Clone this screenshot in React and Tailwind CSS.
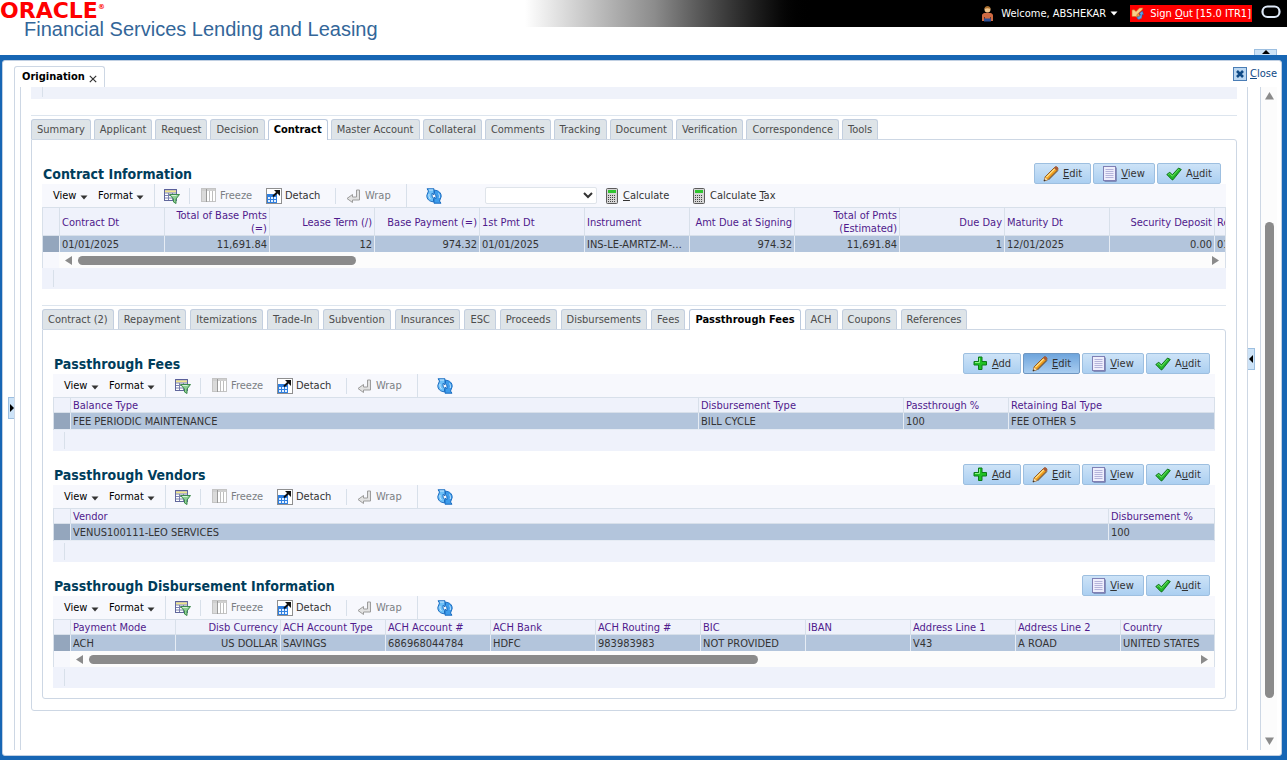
import React from "react";

const Caret = ({ className = "" }) => (
  <svg width="8" height="5" viewBox="0 0 8 5" className={className} aria-hidden="true">
    <path d="M0.5 0.5h7L4 4.5z" fill="currentColor" />
  </svg>
);

const PencilIcon = () => (
  <svg width="16" height="16" viewBox="0 0 16 16" aria-hidden="true">
    <path d="M1 15l1.2-4.2L11.6 1.4c.8-.8 2-.6 2.700.1s.8 1.900.1 2.700L5 13.600z" fill="#f0a01e" stroke="#8a4a0c" strokeWidth=".9" />
    <path d="M3.400 11.200L12 2.600" stroke="#ffe08a" strokeWidth="1.300" />
    <path d="M11 2l1-1c.8-.7 2-.4 2.600.2.700.7.700 1.800 0 2.500l-.9.900z" fill="#a8593a" />
    <path d="M1 15l1-3.800 2.800 2.600z" fill="#f3d9ae" />
    <path d="M.8 15.200l.6-2 1.400 1.400z" fill="#222" />
    <path d="M5.500 14L15 4.500" stroke="#5a3a16" strokeWidth=".8" />
  </svg>
);

const PageIcon = () => (
  <svg width="14" height="16" viewBox="0 0 14 16" aria-hidden="true">
    <rect x="1.500" y="1.500" width="12" height="14" fill="#4f4f86" />
    <rect x=".5" y=".5" width="12" height="14" fill="#eeeefc" stroke="#8080b4" />
    <path d="M2.500 3.500h8M2.500 5.500h8M2.500 7.500h8M2.500 9.500h8M2.500 11.500h8" stroke="#b4b4da" />
  </svg>
);

const CheckIcon = () => (
  <svg width="16" height="14" viewBox="0 0 16 14" aria-hidden="true">
    <path d="M.8 7.500l3-2.300 2.500 2.600L12.600 1l2.700 1.500L7 12.800h-1z" fill="#23b52a" stroke="#0c6b14" strokeWidth=".9" strokeLinejoin="round" />
    <path d="M2.300 7.500l1.500-1 2.500 2.800L12.900 2.200" fill="none" stroke="#6fe566" strokeWidth="1" />
  </svg>
);

const PlusIcon = () => (
  <svg width="15" height="15" viewBox="0 0 15 15" aria-hidden="true">
    <path d="M5.500 1h3.500v4.500h4.500v3.500H9v4.500H5.500V9H1V5.500h4.500z" fill="#1fc024" stroke="#0c7a18" strokeLinejoin="round" />
    <path d="M6.500 2v4.500H2" fill="none" stroke="#8df085" />
  </svg>
);

const QueryIcon = () => (
  <svg width="16" height="16" viewBox="0 0 16 16" aria-hidden="true">
    <rect x=".5" y="1.500" width="12" height="11" fill="#fff" stroke="#61679c" />
    <rect x="1" y="1" width="11" height="1.500" fill="#5a5f9a" />
    <rect x="1" y="2.500" width="11" height="2" fill="#efe58a" />
    <path d="M1 5h11M1 7.500h11M1 10h11M4.500 5v7M8.500 5v7" stroke="#7b81b0" strokeWidth="1" />
    <path d="M5.500 6.500h10L12 11v4.500l-2.500-1.500v-3z" fill="#8ccf93" stroke="#3f8a4d" />
    <path d="M7.500 7.500h5" stroke="#d5f3d6" />
  </svg>
);

const FreezeIcon = () => (
  <svg width="15" height="15" viewBox="0 0 15 15" aria-hidden="true">
    <rect x=".5" y=".5" width="14" height="13" fill="#fff" stroke="#c4c4c4" />
    <rect x="1" y="1" width="13" height="2" fill="#cfcfcf" />
    <rect x="1" y="3" width="4" height="10" fill="#dadada" />
    <path d="M8.500 3v11M11.500 3v11" stroke="#bdbdbd" />
    <path d="M5.500 1v13" stroke="#999" />
  </svg>
);

const DetachIcon = () => (
  <svg width="16" height="16" viewBox="0 0 16 16" aria-hidden="true">
    <rect x=".5" y=".5" width="15" height="15" fill="#fff" stroke="#222" strokeDasharray="1 1" />
    <rect x="1" y="6" width="10" height="9" fill="#2f7fe0" />
    <path d="M2 9h2v2H2zM5 9h2v2H5zM8 9h2v2H8zM2 12h2v2H2zM5 12h2v2H5zM8 12h2v2H8z" fill="#e3f0ff" />
    <path d="M7 8.500L11.500 4" stroke="#111" strokeWidth="1.800" />
    <path d="M8 2h6v6z" fill="#111" />
  </svg>
);

const WrapIcon = () => (
  <svg width="15" height="14" viewBox="0 0 15 14" aria-hidden="true">
    <path d="M10.500 1h3v10H6.500v2.500L1 9.500 6.500 5.500V8h4z" fill="#e2e2e2" stroke="#9c9c9c" strokeLinejoin="round" />
  </svg>
);

const RefreshIcon = () => (
  <svg width="16" height="16" viewBox="0 0 16 16" aria-hidden="true">
    <path d="M1 .8h7v6L6 5.300V7c0 1.500.5 2.500 1.500 3.500v3.300C3 13.500 .8 11 .8 7.500L2.500 3z" fill="#6cbff7" stroke="#1a6cc0" strokeLinejoin="round" />
    <path d="M15 15.200H8v-6l2 1.500V9c0-1.500-.5-2.500-1.500-3.500V2.200C13 2.500 15.200 5 15.200 8.500L13.500 13z" fill="#3d9ceb" stroke="#1a6cc0" strokeLinejoin="round" />
    <path d="M3 2h4M3 6c-.3 2 .2 3.700 1.500 5M12.500 5.500c1 1.500 1.200 3 .7 4.500" fill="none" stroke="#c6e7ff" />
  </svg>
);

const CalculatorIcon = () => (
  <svg width="12" height="16" viewBox="0 0 12 16" aria-hidden="true">
    <rect x=".5" y=".5" width="11" height="15" rx="1" fill="#d6d6d6" stroke="#5c5c5c" />
    <rect x="2" y="2" width="8" height="3" fill="#2fc42f" />
    <path d="M2 7.500h8M2 9.500h8M2 11.500h8M2 13.500h8" stroke="#444" strokeDasharray="1 1" />
  </svg>
);

const UserIcon = () => (
  <svg width="13" height="16" viewBox="0 0 13 16" aria-hidden="true">
    <circle cx="6.500" cy="3.500" r="3" fill="#f0c48c" />
    <path d="M3.500 3C3.500 1 5 .3 6.500.3S9.500 1 9.500 3C8 2 5 2 3.500 3z" fill="#a86a28" />
    <path d="M1 15V9.500C1 7.500 3.500 6.800 6.500 6.800s5.500.7 5.500 2.700V15h-2v-4H3v4z" fill="#cf6a42" />
    <path d="M3.500 8h6v5h-6z" fill="#cf6a42" />
    <path d="M3 12.500h7v3H3z" fill="#2c4f96" />
  </svg>
);

const SignOutIcon = () => (
  <svg width="13" height="13" viewBox="0 0 13 13" aria-hidden="true">
    <path d="M2.500 7.500L8 12.500l3-1.500-4-5z" fill="#e39a45" />
    <path d="M12 1L8.500 1 5 4.500 3.200 2.700 1 3v6.500h6L5.500 8 11 3z" fill="#f9d089" stroke="#c96e1e" strokeWidth=".6" />
    <path d="M6.500 12c3 .8 5-1 4.500-4.500l1.500.3L11.500 4 8 6.500l1.300.5c.2 1.800-1 3-3.300 3z" fill="#5ba6f0" stroke="#215a9c" strokeWidth=".5" />
  </svg>
);

const Tabs = ({ items, active, gap }) => (
  <div className="border-t border-[#dde5ee] pt-[3px]">
    <div className={`flex ${gap}`} role="tablist">
      {items.map((t) =>
        t === active ? (
          <button key={t} role="tab" aria-selected="true" className="relative z-10 -mb-px h-[21px] whitespace-nowrap rounded-t-[3px] border border-b-0 border-[#bccade] bg-white px-[5px] font-bold text-black">
            {t}
          </button>
        ) : (
          <button key={t} role="tab" aria-selected="false" className="h-5 whitespace-nowrap rounded-t-[3px] border border-b-0 border-[#c3cfdf] bg-[#dee4e8] px-[5px] text-[#4c4c4c]">
            {t}
          </button>
        )
      )}
    </div>
  </div>
);

const actionDefs = {
  Add: { icon: PlusIcon, width: "w-[58px]", label: <><u>A</u>dd</> },
  Edit: { icon: PencilIcon, width: "w-[57px]", label: <><u>E</u>dit</> },
  View: { icon: PageIcon, width: "w-[62px]", label: <><u>V</u>iew</> },
  Audit: { icon: CheckIcon, width: "w-[64px]", label: <>A<u>u</u>dit</> },
};

const Actions = ({ names, pressed }) => (
  <div className="flex gap-[2px] pr-[5px]">
    {names.map((n) => {
      const { icon: Icon, width, label } = actionDefs[n];
      const tone =
        n === pressed
          ? "border-[#6f97c2] bg-linear-to-b from-[#6fa5dc] to-[#a9cdf0]"
          : "border-[#9dbfe0] bg-linear-to-b from-[#cde3f7] to-[#abcff1]";
      return (
        <button key={n} className={`flex h-[21px] items-center justify-center gap-1 rounded-[2px] border text-[#333] ${width} ${tone}`}>
          <Icon />
          <span>{label}</span>
        </button>
      );
    })}
  </div>
);

const Separator = () => <span className="w-px self-stretch bg-[#d8e0ea]" />;
const ShortSeparator = () => <span className="h-4 w-px bg-[#d8e0ea]" />;

const Toolbar = ({ extra }) => (
  <div className="flex h-[23px] items-center bg-[#f7f8fd] text-[#333]">
    <button className="ml-[11px] flex w-[45px] items-center gap-1 text-black">View <Caret className="mt-1 text-[#333]" /></button>
    <button className="flex w-14 items-center gap-[3px] text-black">Format <Caret className="mt-1 text-[#333]" /></button>
    <Separator />
    <button aria-label="Query by example" className="flex w-[34px] justify-center"><QueryIcon /></button>
    <ShortSeparator />
    <button disabled className="ml-[11px] flex w-[65px] items-center gap-1 text-[#7b7f84]"><FreezeIcon />Freeze</button>
    <button className="flex w-[69px] items-center gap-[3px]"><DetachIcon />Detach</button>
    <ShortSeparator />
    <button disabled className="ml-[10px] flex w-[60px] items-center gap-1 text-[#7b7f84]"><WrapIcon />Wrap</button>
    <Separator />
    <button aria-label="Refresh" className="ml-[19px]"><RefreshIcon /></button>
    {extra}
  </div>
);

const CalculateTools = () => (
  <div className="ml-[43px] flex items-center">
    <select aria-label="Calculation" className="h-[17px] w-28 rounded-[2px] border border-[#dfe4ea] bg-white text-[11px]">
      <option></option>
    </select>
    <button className="ml-[9px] flex w-[87px] items-center gap-[5px]"><CalculatorIcon /><span><u>C</u>alculate</span></button>
    <button className="flex items-center gap-[5px]"><CalculatorIcon /><span>Calculate <u>T</u>ax</span></button>
  </div>
);

const DataTable = ({ columns, row, tall, thumb }) => (
  <div>
    <div className="border-x border-[#d8e0ea]">
      <table className="w-full table-fixed border-separate border-spacing-0">
        <colgroup>
          <col className="w-4" />
          {columns.map((c) => <col key={c.name} className={c.width} />)}
        </colgroup>
        <thead>
          <tr className={`bg-[#eff2fb] ${tall ? "h-[29px]" : "h-4"}`}>
            <th aria-label="Row" className="border-y border-[#d8e0ea] p-0" />
            {columns.map((c) => (
              <th key={c.name} className={`overflow-hidden border-y border-l border-[#d8e0ea] px-[2px] pb-0 font-normal text-[#4f1a8c] ${tall ? "pt-px leading-[13px]" : "pt-[2px] leading-[12px]"} ${c.right ? "text-right" : "text-left"} ${c.wrap ? "" : "whitespace-nowrap"}`}>
                {c.name}
              </th>
            ))}
          </tr>
        </thead>
        <tbody>
          <tr className={`bg-[#b3c5dc] text-[#333] ${thumb ? "h-4" : "h-[17px]"}`}>
            <td className={`border-[#e6ecf4] bg-[#94a6bd] p-0 ${thumb ? "" : "border-b"}`} />
            {row.map((v, i) => (
              <td key={i} className={`overflow-hidden whitespace-nowrap border-l border-[#e6ecf4] px-[2px] pb-0 pt-[2px] leading-[14px] ${thumb ? "" : "border-b"} ${columns[i].clip ? "text-clip" : "text-ellipsis"} ${columns[i].right ? "text-right" : "text-left"}`}>
                {v}
              </td>
            ))}
          </tr>
        </tbody>
      </table>
      {thumb && (
        <div className="flex h-4 bg-[#fcfcfc] text-[#8b8b8b]">
          <span className="w-4 bg-[#f7f8fd]" />
          <div className="flex flex-1 items-center gap-[6px] px-[6px]">
            <svg width="7" height="9" viewBox="0 0 7 9" aria-hidden="true"><path d="M7 0v9L0 4.500z" fill="currentColor" /></svg>
            <div className="flex-1"><div className={`h-[9px] rounded-full bg-[#8b8b8b] ${thumb}`} /></div>
            <svg width="7" height="9" viewBox="0 0 7 9" aria-hidden="true"><path d="M0 0v9l7-4.500z" fill="currentColor" /></svg>
          </div>
        </div>
      )}
    </div>
    <div className="flex h-[21px] items-center bg-[#eff2fb] pl-[11px]"><span className="h-[17px] w-px bg-[#d8e0ea]" /></div>
  </div>
);

const Section = ({ title, actions, pressed, extra, ...table }) => (
  <section>
    <div className="flex items-center justify-between">
      <h2 className="pl-px text-[14px] font-bold text-[#003d5b]">{title}</h2>
      <Actions names={actions} pressed={pressed} />
    </div>
    <Toolbar extra={extra} />
    <DataTable {...table} />
  </section>
);

const W = "w-[105px]";

const contractColumns = [
  { name: "Contract Dt", width: W },
  { name: "Total of Base Pmts (=)", width: W, right: true, wrap: true },
  { name: "Lease Term (/)", width: W, right: true },
  { name: "Base Payment (=)", width: W, right: true },
  { name: "1st Pmt Dt", width: W },
  { name: "Instrument", width: W },
  { name: "Amt Due at Signing", width: W, right: true },
  { name: "Total of Pmts (Estimated)", width: W, right: true, wrap: true },
  { name: "Due Day", width: W, right: true },
  { name: "Maturity Dt", width: W },
  { name: "Security Deposit", width: W, right: true },
  { name: "Rebate", width: "w-auto", clip: true },
];
const contractRow = ["01/01/2025", "11,691.84", "12", "974.32", "01/01/2025", "INS-LE-AMRTZ-M-1001", "974.32", "11,691.84", "1", "12/01/2025", "0.00", "01/01/2025"];

const feeColumns = [
  { name: "Balance Type", width: "w-auto" },
  { name: "Disbursement Type", width: "w-[205px]" },
  { name: "Passthrough %", width: W },
  { name: "Retaining Bal Type", width: "w-[206px]" },
];

const vendorColumns = [
  { name: "Vendor", width: "w-auto" },
  { name: "Disbursement %", width: "w-[106px]" },
];

const disbursementColumns = [
  { name: "Payment Mode", width: W },
  { name: "Disb Currency", width: W, right: true },
  { name: "ACH Account Type", width: W },
  { name: "ACH Account #", width: W },
  { name: "ACH Bank", width: W },
  { name: "ACH Routing #", width: W },
  { name: "BIC", width: W },
  { name: "IBAN", width: W },
  { name: "Address Line 1", width: W },
  { name: "Address Line 2", width: W },
  { name: "Country", width: "w-auto" },
];
const disbursementRow = ["ACH", "US DOLLAR", "SAVINGS", "686968044784", "HDFC", "983983983", "NOT PROVIDED", "", "V43", "A ROAD", "UNITED STATES"];

const Header = () => (
  <header className="relative flex h-[55px] items-start bg-white">
    <div className="w-[525px]">
      <div className="flex items-start pt-px font-['DejaVu_Sans',sans-serif] text-[22px] font-bold leading-5 text-[#f00]">
        ORACLE<span className="text-[7px] leading-3">®</span>
      </div>
      <h1 className="pl-6 font-['Liberation_Sans',sans-serif] text-[20px] leading-4 text-[#336699]">Financial Services Lending and Leasing</h1>
    </div>
    <div className="flex h-[27px] flex-1 items-center justify-end bg-linear-to-r from-white via-[#8c8c8c] via-17% to-black to-38% pr-[6px] text-white">
      <UserIcon />
      <button className="ml-[7px] flex items-center gap-1">Welcome, ABSHEKAR <Caret /></button>
      <a href="#signout" className="ml-3 flex h-[17px] items-center gap-[6px] bg-[#f00] px-px">
        <SignOutIcon />
        <span>Sign <u>O</u>ut [15.0 ITR1]</span>
      </a>
      <svg width="20" height="14" viewBox="0 0 20 14" className="mb-1 ml-[9px]" aria-hidden="true">
        <rect x="1.500" y="1.500" width="17" height="10.500" rx="5" fill="none" stroke="#dfe9f7" strokeWidth="2.200" />
      </svg>
    </div>
    <button aria-label="Collapse header" className="absolute bottom-0 right-[10px] flex h-[6px] w-[23px] items-start justify-center border border-b-0 border-[#9dbfe0] bg-[#cde3f7]">
      <svg width="8" height="4" viewBox="0 0 8 4" aria-hidden="true"><path d="M0 4h8L4 0z" fill="#000" /></svg>
    </button>
  </header>
);

const ContractPage = () => (
  <div className="flex-1 px-[10px]">
    <div className="h-3 bg-[#eff2fa] pl-[11px]"><div className="h-[10px] w-px bg-[#d8e0ea]" /></div>
    <div className="pt-4">
      <Tabs gap="gap-[3px]" active="Contract" items={["Summary", "Applicant", "Request", "Decision", "Contract", "Master Account", "Collateral", "Comments", "Tracking", "Document", "Verification", "Correspondence", "Tools"]} />
      <div className="rounded-[3px] rounded-tl-none border border-[#cdd7e4] px-[10px] pb-[11px] pt-[23px]">
        <Section
          title="Contract Information"
          actions={["Edit", "View", "Audit"]}
          extra={<CalculateTools />}
          columns={contractColumns}
          row={contractRow}
          tall
          thumb="w-[278px]"
        />
        <div className="pt-4">
          <Tabs gap="gap-1" active="Passthrough Fees" items={["Contract (2)", "Repayment", "Itemizations", "Trade-In", "Subvention", "Insurances", "ESC", "Proceeds", "Disbursements", "Fees", "Passthrough Fees", "ACH", "Coupons", "References"]} />
          <div className="flex flex-col gap-[13px] rounded-[3px] rounded-tl-none border border-[#cdd7e4] p-[10px] pt-[23px]">
            <Section
              title="Passthrough Fees"
              actions={["Add", "Edit", "View", "Audit"]}
              pressed="Edit"
              columns={feeColumns}
              row={["FEE PERIODIC MAINTENANCE", "BILL CYCLE", "100", "FEE OTHER 5"]}
            />
            <Section
              title="Passthrough Vendors"
              actions={["Add", "Edit", "View", "Audit"]}
              columns={vendorColumns}
              row={["VENUS100111-LEO SERVICES", "100"]}
            />
            <Section
              title="Passthrough Disbursement Information"
              actions={["View", "Audit"]}
              columns={disbursementColumns}
              row={disbursementRow}
              thumb="w-[669px]"
            />
          </div>
        </div>
      </div>
    </div>
  </div>
);

const PageScrollbar = () => (
  <div className="flex w-[17px] flex-col items-center border-l border-[#cdd7e4] bg-[#fcfcfc] py-[5px] text-[#8b8b8b]">
    <svg width="9" height="8" viewBox="0 0 9 8" aria-hidden="true"><path d="M0 7.500h9L4.500 0z" fill="currentColor" /></svg>
    <div className="flex w-[9px] flex-1 flex-col">
      <div className="flex-[122]" />
      <div className="flex-[476] rounded-full bg-[#8b8b8b]" />
      <div className="flex-[39]" />
    </div>
    <svg width="9" height="8" viewBox="0 0 9 8" aria-hidden="true"><path d="M0 .5h9L4.500 8z" fill="currentColor" /></svg>
  </div>
);

export default function App() {
  return (
    <div className="flex min-h-screen flex-col bg-white font-['DejaVu_Sans_Condensed','Noto_Sans',sans-serif] text-[11px] leading-[14px]">
      <Header />
      <main className="flex flex-1 flex-col bg-[#1766b4] pb-1 pl-[2px] pr-[5px] pt-[5px]">
        <div className="flex flex-1 flex-col rounded-[3px] border border-[#c0cfe2] bg-white pb-[5px]">
          <div className="flex h-[26px] items-end justify-between pl-[11px] pr-1">
            <div className="flex h-[21px] items-center gap-1 rounded-t-[3px] border border-b-0 border-[#cdd7e4] px-[7px] font-bold text-black">
              Origination
              <button aria-label="Close tab" className="mt-[3px]">
                <svg width="8" height="8" viewBox="0 0 8 8" aria-hidden="true"><path d="M.8.8l6.400 6.400M7.200.8L.8 7.200" stroke="#333" strokeWidth="1.200" /></svg>
              </button>
            </div>
            <button className="mb-[6px] flex items-center gap-[3px] text-[#0f4a86]">
              <svg width="14" height="14" viewBox="0 0 14 14" aria-hidden="true">
                <rect x=".5" y=".5" width="13" height="13" fill="#bcd8f2" stroke="#4a7db5" />
                <path d="M4 4l6 6M10 4l-6 6" stroke="#0f4a86" strokeWidth="2.600" />
              </svg>
              <span><u>C</u>lose</span>
            </button>
          </div>
          <div className="flex flex-1">
            <div className="flex w-[11px] items-center justify-end">
              <button aria-label="Expand left panel" className="mb-[22px] flex h-[22px] w-[6px] items-center justify-center border border-r-0 border-[#9dbfe0] bg-[#cde3f7]">
                <svg width="4" height="8" viewBox="0 0 4 8" aria-hidden="true"><path d="M0 0v8l4-4z" fill="#000" /></svg>
              </button>
            </div>
            <div className="w-[6px] border-l border-[#cdd7e4]" />
            <div className="flex flex-1 border-x border-[#cdd7e4]">
              <ContractPage />
            </div>
            <div className="w-3">
              <button aria-label="Expand right panel" className="mt-[261px] flex h-[22px] w-[7px] items-center justify-center border border-l-0 border-[#9dbfe0] bg-[#cde3f7]">
                <svg width="4" height="8" viewBox="0 0 4 8" aria-hidden="true"><path d="M4 0v8L0 4z" fill="#000" /></svg>
              </button>
            </div>
            <PageScrollbar />
            <div className="w-1" />
          </div>
        </div>
      </main>
    </div>
  );
}
